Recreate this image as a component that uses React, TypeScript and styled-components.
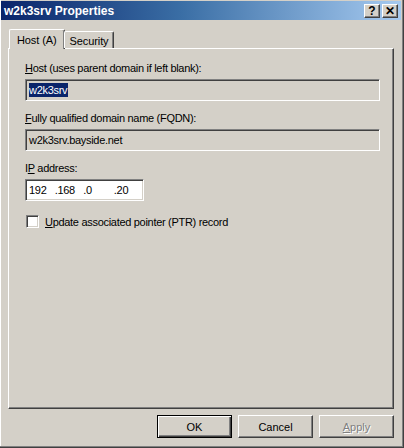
import React from "react";
import styled, { createGlobalStyle } from "styled-components";

const Global = createGlobalStyle`
  html, body { margin: 0; padding: 0; background: #d4d0c8; }
  body { font-family: "Liberation Sans", Arial, sans-serif; font-size: 11px; color: #000; }
`;

const Window = styled.div`
  box-sizing: border-box;
  width: 404px;
  height: 448px;
  background: #d4d0c8;
  display: flex;
  flex-direction: column;
  padding: 1px 2px 2px 1px;
  border-right: 1px solid #404040;
  border-bottom: 1px solid #404040;
  box-shadow: inset -1px -1px #808080, inset 1px 0 #ffffff;
`;

const TitleBar = styled.div`
  height: 19px;
  display: flex;
  align-items: center;
  padding: 0 3px 0 3px;
  background: linear-gradient(to right, #0a246a 0%, #3a6ea5 45%, #a6caf0 100%);
`;

const Title = styled.div`
  flex: 1;
  color: #fff;
  font-weight: bold;
  font-size: 12px;
  font-family: "Liberation Sans", Arial, sans-serif;
`;

const CaptionButton = styled.div`
  box-sizing: border-box;
  width: 16px;
  height: 14px;
  margin-left: 2px;
  background: #d4d0c8;
  border-top: 1px solid #fff;
  border-left: 1px solid #fff;
  border-right: 1px solid #404040;
  border-bottom: 1px solid #404040;
  box-shadow: inset -1px -1px #808080;
  display: flex;
  align-items: center;
  justify-content: center;
  font-weight: bold;
  font-size: 12px;
  line-height: 1;
  color: #000;
`;

const Body = styled.div`
  flex: 1;
  display: flex;
  flex-direction: column;
  padding: 8px 7px 0 7px;
`;

const TabRow = styled.div`
  display: flex;
  align-items: flex-end;
  height: 20px;
  padding-left: 1px;
  position: relative;
  z-index: 1;
`;

const Tab = styled.div<{ $active?: boolean }>`
  box-sizing: border-box;
  height: ${(p) => (p.$active ? "20px" : "17px")};
  padding: 0 ${(p) => (p.$active ? "7px" : "5px")};
  margin-left: ${(p) => (p.$active ? "0" : "-1px")};
  margin-bottom: ${(p) => (p.$active ? "-1px" : "0")};
  background: #d4d0c8;
  border-top: 1px solid #fff;
  border-left: 1px solid #fff;
  border-right: 1px solid #404040;
  box-shadow: inset -1px 0 #808080;
  border-radius: 2px 2px 0 0;
  display: flex;
  align-items: center;
  font-size: 11px;
  letter-spacing: -0.1px;
  padding-top: ${(p) => (p.$active ? "0" : "1px")};
`;

const Panel = styled.div`
  box-sizing: border-box;
  height: 361px;
  border-top: 1px solid #fff;
  border-left: 1px solid #fff;
  border-right: 1px solid #404040;
  border-bottom: 1px solid #404040;
  box-shadow: inset -1px -1px #808080;
  padding: 12px 12px 0 16px;
  display: flex;
  flex-direction: column;
  font-size: 11px;
  letter-spacing: -0.3px;
`;

const Label = styled.div<{ $gap?: number }>`
  margin-top: ${(p) => p.$gap ?? 0}px;
  height: 14px;
  line-height: 14px;
`;

const Field = styled.div<{ $white?: boolean; $width?: number }>`
  box-sizing: border-box;
  height: 22px;
  width: ${(p) => (p.$width ? `${p.$width}px` : "auto")};
  margin-top: 4px;
  margin-right: ${(p) => (p.$width ? "0" : "1px")};
  background: ${(p) => (p.$white ? "#fff" : "#d4d0c8")};
  border-top: 1px solid #808080;
  border-left: 1px solid #808080;
  border-right: 1px solid #fff;
  border-bottom: 1px solid #fff;
  box-shadow: inset 1px 1px #404040, inset -1px -1px #d4d0c8;
  display: flex;
  align-items: center;
  padding-left: 3px;
  white-space: pre;
`;

const Selected = styled.span`
  background: #0a246a;
  color: #fff;
  padding: 1px 1px 1px 0;
`;

const CheckRow = styled.div`
  display: flex;
  align-items: center;
  margin-top: 14px;
  gap: 6px;
`;

const CheckBox = styled.div`
  box-sizing: border-box;
  width: 13px;
  height: 13px;
  margin-left: 1px;
  background: #fff;
  border-top: 1px solid #808080;
  border-left: 1px solid #808080;
  border-right: 1px solid #fff;
  border-bottom: 1px solid #fff;
  box-shadow: inset 1px 1px #404040, inset -1px -1px #d4d0c8;
`;

const ButtonRow = styled.div`
  display: flex;
  justify-content: flex-end;
  gap: 6px;
  padding: 6px 0 0 0;
`;

const Button = styled.div<{ $default?: boolean; $disabled?: boolean }>`
  box-sizing: border-box;
  width: 75px;
  height: 23px;
  background: #d4d0c8;
  display: flex;
  align-items: center;
  justify-content: center;
  font-size: 11px;
  color: ${(p) => (p.$disabled ? "#808080" : "#000")};
  text-shadow: ${(p) => (p.$disabled ? "1px 1px #fff" : "none")};
  ${(p) =>
    p.$default
      ? `border: 1px solid #000;
         box-shadow: inset 1px 1px #fff, inset -1px -1px #404040, inset -2px -2px #808080;`
      : `border-top: 1px solid #fff;
         border-left: 1px solid #fff;
         border-right: 1px solid #404040;
         border-bottom: 1px solid #404040;
         box-shadow: inset -1px -1px #808080;`}
`;

const U = styled.span`
  text-decoration: underline;
`;

export default function App() {
  return (
    <>
      <Global />
      <Window>
        <TitleBar>
          <Title>w2k3srv Properties</Title>
          <CaptionButton>?</CaptionButton>
          <CaptionButton>✕</CaptionButton>
        </TitleBar>
        <Body>
          <TabRow>
            <Tab $active>Host (A)</Tab>
            <Tab>Security</Tab>
          </TabRow>
          <Panel>
            <Label>
              <U>H</U>ost (uses parent domain if left blank):
            </Label>
            <Field>
              <Selected>w2k3srv</Selected>
            </Field>
            <Label $gap={10}>
              <U>F</U>ully qualified domain name (FQDN):
            </Label>
            <Field>w2k3srv.bayside.net</Field>
            <Label $gap={10}>
              I<U>P</U> address:
            </Label>
            <Field $white $width={119}>
              {"192   .168   .0        .20"}
            </Field>
            <CheckRow>
              <CheckBox />
              <span>
                <U>U</U>pdate associated pointer (PTR) record
              </span>
            </CheckRow>
          </Panel>
          <ButtonRow>
            <Button $default>OK</Button>
            <Button>Cancel</Button>
            <Button $disabled>
              <span>
                <U>A</U>pply
              </span>
            </Button>
          </ButtonRow>
        </Body>
      </Window>
    </>
  );
}
